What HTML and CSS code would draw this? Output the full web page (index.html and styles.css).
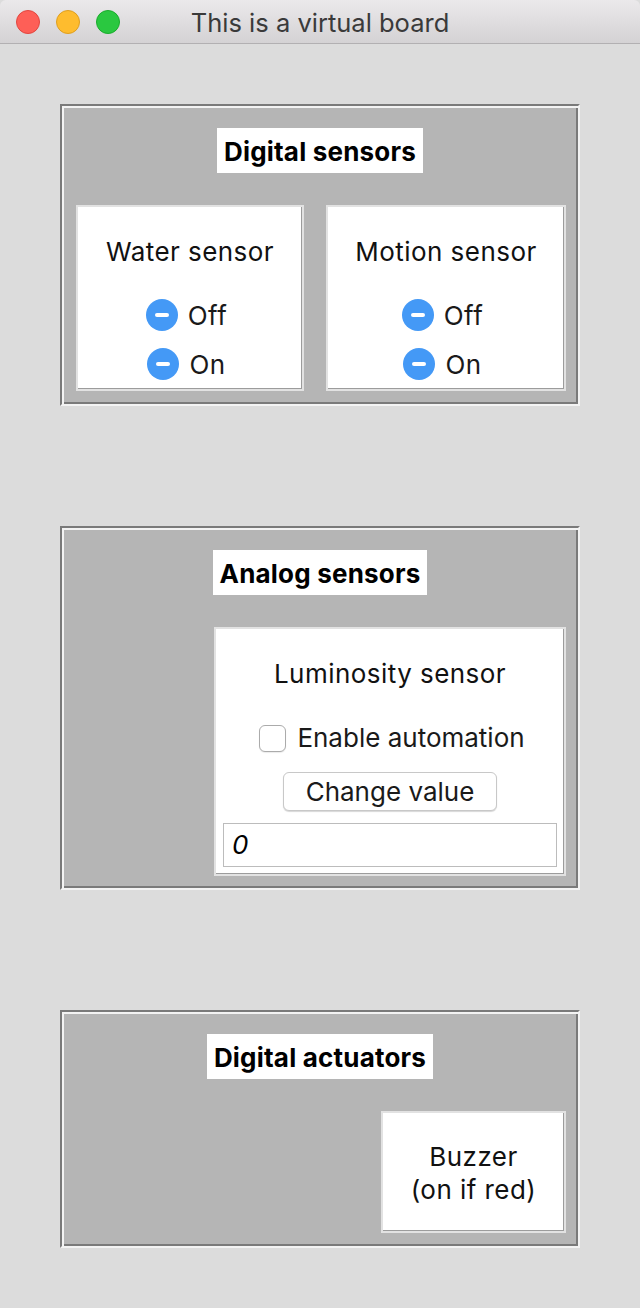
FILE: index.html
```html
<!DOCTYPE html>
<html lang="en">
<head>
<meta charset="utf-8">
<title>This is a virtual board</title>
<link rel="stylesheet" href="styles.css">
</head>
<body>
<div class="window">
  <header class="titlebar">
    <div class="lights">
      <span class="light light-red"></span>
      <span class="light light-yellow"></span>
      <span class="light light-green"></span>
    </div>
    <div class="title">This is a virtual board</div>
  </header>

  <main class="board">
    <section class="panel">
      <h2 class="panel-label">Digital sensors</h2>
      <div class="panel-row">
        <div class="card card-water">
          <div class="card-title">Water sensor</div>
          <div class="radios">
            <div class="radio"><span class="radio-dot"></span><span class="radio-text">Off</span></div>
            <div class="radio"><span class="radio-dot"></span><span class="radio-text">On</span></div>
          </div>
        </div>
        <div class="card card-motion">
          <div class="card-title">Motion sensor</div>
          <div class="radios">
            <div class="radio"><span class="radio-dot"></span><span class="radio-text">Off</span></div>
            <div class="radio"><span class="radio-dot"></span><span class="radio-text">On</span></div>
          </div>
        </div>
      </div>
    </section>

    <section class="panel panel-analog">
      <h2 class="panel-label">Analog sensors</h2>
      <div class="panel-row">
        <div class="card card-lum">
          <div class="card-title">Luminosity sensor</div>
          <label class="check-row"><span class="checkbox"></span><span class="check-text">Enable automation</span></label>
          <div class="button">Change value</div>
          <div class="entry">0</div>
        </div>
      </div>
    </section>

    <section class="panel">
      <h2 class="panel-label">Digital actuators</h2>
      <div class="panel-row">
        <div class="card card-buzzer">
          <div class="buzzer-text">Buzzer<br>(on if red)</div>
        </div>
      </div>
    </section>
  </main>
</div>
</body>
</html>
```

FILE: styles.css
```css
* {
  box-sizing: border-box;
}

html, body {
  margin: 0;
  padding: 0;
  background: #dcdcdc;
}

body {
  font-family: Inter, "Liberation Sans", sans-serif;
  color: #111;
}

.window {
  width: 640px;
  min-height: 1308px;
  background: #dcdcdc;
}

.titlebar {
  height: 44px;
  display: flex;
  align-items: center;
  position: relative;
  background: linear-gradient(#ebe9eb, #d4d2d4);
  border-bottom: 1px solid #b2b0b2;
  border-radius: 6px 6px 0 0;
}

.lights {
  display: flex;
  gap: 16px;
  padding-left: 16px;
}

.light {
  width: 24px;
  height: 24px;
  border-radius: 50%;
  display: block;
}

.light-red {
  background: #fe5f57;
  border: 1px solid #e2463f;
}

.light-yellow {
  background: #febc2e;
  border: 1px solid #df9f1f;
}

.light-green {
  background: #2ac840;
  border: 1px solid #1aac2c;
}

.title {
  position: absolute;
  left: 0;
  right: 0;
  top: 1px;
  bottom: 0;
  display: flex;
  align-items: center;
  justify-content: center;
  font-size: 25.5px;
  color: #3a3a3a;
  pointer-events: none;
}

.board {
  padding: 60px 0 0 60px;
  display: flex;
  flex-direction: column;
  gap: 120px;
}

.panel {
  width: 520px;
  background: #b5b5b5;
  border: 2px solid;
  border-color: #7a7a7a #f3f3f3 #f3f3f3 #7a7a7a;
  box-shadow: inset 2px 2px 0 #f3f3f3, inset -2px -2px 0 #7a7a7a;
  padding: 22px 12px 13px 14px;
  display: flex;
  flex-direction: column;
  align-items: center;
}

.panel-analog {
  padding-bottom: 12px;
}

.panel-label {
  margin: 0 0 32px 0;
  height: 45px;
  line-height: 43px;
  padding: 2px 7px 0 7px;
  background: #fff;
  font-size: 26px;
  font-weight: 700;
  letter-spacing: 0.2px;
  color: #000;
  align-self: center;
  position: relative;
  left: -1px;
}

.panel-row {
  align-self: stretch;
  display: flex;
  justify-content: flex-end;
  gap: 22px;
}

.card {
  background: #fff;
  border: 2px solid #e2e2e2;
  box-shadow: inset -1px -1px 0 #9c9c9c;
  display: flex;
  flex-direction: column;
  align-items: center;
  letter-spacing: 0.45px;
}

.card-title {
  font-size: 26px;
  line-height: 32px;
  height: 32px;
  white-space: nowrap;
}

.card-water {
  width: 228px;
  height: 186px;
  padding-top: 29px;
}

.card-motion {
  width: 240px;
  height: 186px;
  padding-top: 29px;
}

.radios {
  margin-top: 27px;
  display: flex;
  flex-direction: column;
  gap: 9px;
}

.radio {
  height: 40px;
  display: flex;
  align-items: center;
  justify-content: center;
  gap: 10px;
  padding-right: 7px;
}

.radio-dot {
  width: 32px;
  height: 32px;
  border-radius: 50%;
  background: #4499f6;
  display: flex;
  align-items: center;
  justify-content: center;
}

.radio-dot::after {
  content: "";
  width: 14px;
  height: 4px;
  border-radius: 2px;
  background: #fff;
}

.radio-text {
  font-size: 26px;
  line-height: 32px;
  color: #1a1a1a;
  position: relative;
  top: 1px;
}

.card-lum {
  width: 352px;
  height: 249px;
  padding: 29px 7px 0 7px;
}

.check-row {
  margin-top: 32px;
  height: 32px;
  display: flex;
  align-items: center;
  gap: 11px;
  padding-left: 4px;
}

.checkbox {
  width: 27px;
  height: 27px;
  border: 1px solid #ababab;
  border-radius: 6px;
  background: #fff;
  box-shadow: 0 1px 1px rgba(0, 0, 0, 0.08);
}

.check-text {
  font-size: 26px;
  line-height: 32px;
  color: #1a1a1a;
  letter-spacing: 0;
}

.button {
  margin-top: 18px;
  width: 214px;
  height: 39px;
  border: 1px solid #c8c8c8;
  border-radius: 6px;
  background: #fff;
  box-shadow: 0 1px 1px rgba(0, 0, 0, 0.16);
  display: flex;
  align-items: center;
  justify-content: center;
  font-size: 26px;
  color: #1a1a1a;
  letter-spacing: 0;
}

.entry {
  margin-top: 12px;
  align-self: stretch;
  height: 44px;
  border: 1px solid #bcbcbc;
  background: #fff;
  font-size: 26px;
  font-style: italic;
  line-height: 42px;
  padding-left: 8px;
  color: #000;
}

.card-buzzer {
  width: 185px;
  height: 122px;
  padding-top: 27px;
}

.buzzer-text {
  font-size: 26px;
  line-height: 33px;
  text-align: center;
  color: #111;
}
```
